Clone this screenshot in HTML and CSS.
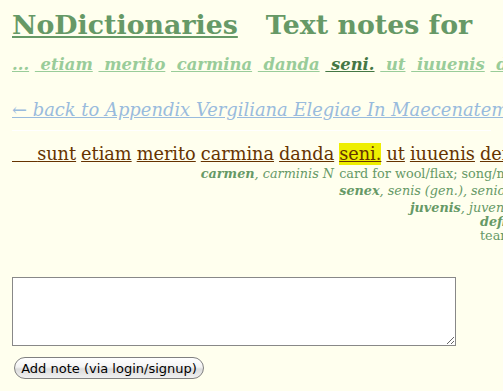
FILE: index.html
```html
<!DOCTYPE html>
<html>
<head>
<meta charset="utf-8">
<link rel="stylesheet" href="styles.css">
</head>
<body>
<div class="page">
  <h1 class="title"><a class="home" href="#">NoDictionaries</a><span class="heading">Text notes for</span></h1>
  <div class="nav">
    <a href="#">...</a> <a href="#">&nbsp;etiam</a> <a href="#">&nbsp;merito</a> <a href="#">&nbsp;carmina</a> <a href="#">&nbsp;danda</a> <a class="current" href="#">&nbsp;seni.</a> <a href="#">&nbsp;ut</a> <a href="#">&nbsp;iuuenis</a> <a href="#">&nbsp;deflendus</a> <a href="#">&nbsp;enim</a>
  </div>
  <div class="back"><a href="#">← back to Appendix Vergiliana Elegiae In Maecenatem</a></div>
  <div class="textblock">
    <div class="grid">
      <a class="w c1" href="#"><span class="lead">&nbsp;&nbsp;&nbsp;&nbsp;&nbsp;</span>sunt</a>
      <a class="w c2" href="#">etiam</a>
      <a class="w c3" href="#">merito</a>
      <a class="w c4" href="#">carmina</a>
      <a class="w c5" href="#">danda</a>
      <a class="w c6 hl" href="#">seni.</a>
      <a class="w c7" href="#">ut</a>
      <a class="w c8" href="#">iuuenis</a>
      <a class="w c9" href="#">deflendus</a>
      <a class="w c10" href="#">enim</a>

      <div class="g r2 c4"><b>carmen</b><i>, carminis N</i></div>
      <div class="g r2 c6">card for wool/flax; song/music; poem</div>
      <div class="g r3 c6"><b>senex</b><i>, senis (gen.), senior -or -us, -</i></div>
      <div class="g r4 c8"><b>juvenis</b><i>, juvenis M</i></div>
      <div class="g r5 c9 wrap"><b>defleo</b><i>, deflere, deflevi</i><br>tears</div>
    </div>
  </div>
  <form class="noteform">
    <textarea class="note"></textarea>
    <button type="button" class="addbtn">Add note (via login/signup)</button>
  </form>
</div>
</body>
</html>
```
FILE: styles.css
```css
html, body {
  margin: 0;
  padding: 0;
  overflow: hidden;
  background: #ffffee;
}
.page {
  padding: 0 12px;
  font-family: "DejaVu Serif", Georgia, serif;
  white-space: nowrap;
}
.title {
  margin: 0;
  padding-top: 9px;
  font-size: 26.8px;
  line-height: 32px;
  font-weight: bold;
  color: #669966;
}
.title a {
  color: #669966;
}
.heading {
  margin-left: 28px;
}
.nav {
  margin-top: 14px;
  font-size: 16.4px;
  line-height: 20px;
  font-weight: bold;
  font-style: italic;
}
.nav a {
  color: #99cc99;
}
.nav a.current {
  color: #447744;
}
.back {
  margin-top: 24px;
  font-size: 17.9px;
  line-height: 22px;
  font-style: italic;
}
.back a {
  color: #99bbdd;
}
.textblock {
  margin-top: 9px;
  border-top: 1px solid #ffffff;
  padding-top: 12px;
}
.grid {
  display: grid;
  grid-template-columns: repeat(10, max-content);
  grid-template-rows: 22px 17px 17px 17px 28px;
  column-gap: 5px;
}
.w {
  grid-row: 1;
  font-size: 17.7px;
  line-height: 22px;
  color: #663300;
}
.lead {
  letter-spacing: -0.6px;
}
.hl {
  background: #eeee00;
}
.g {
  width: 0;
  font-size: 12.8px;
  line-height: 17px;
  color: #669966;
  white-space: nowrap;
  grid-column-end: -1;
}
.g b {
  font-weight: bold;
  font-style: italic;
}
.g.wrap {
  line-height: 14px;
  margin-top: -1px;
}
.c1 { grid-column-start: 1; }
.c2 { grid-column-start: 2; }
.c3 { grid-column-start: 3; }
.c4 { grid-column-start: 4; }
.c5 { grid-column-start: 5; }
.c6 { grid-column-start: 6; }
.c7 { grid-column-start: 7; }
.c8 { grid-column-start: 8; }
.c9 { grid-column-start: 9; }
.c10 { grid-column-start: 10; }
.r2 { grid-row: 2; }
.r3 { grid-row: 3; }
.r4 { grid-row: 4; }
.r5 { grid-row: 5; }
.noteform {
  margin: 33px 0 0;
}
.note {
  display: block;
  box-sizing: border-box;
  width: 444px;
  height: 69px;
  margin: 0;
  border: 1px solid #888888;
  background: #ffffff;
}
.addbtn {
  display: block;
  margin: 11px 0 0 2px;
  height: 22px;
  width: 190px;
  padding: 0;
  border: 1px solid #808080;
  border-radius: 11px;
  background: linear-gradient(#ffffff 0%, #f4f4f4 45%, #dcdcdc 55%, #f0f0f0 100%);
  font-family: "DejaVu Sans", sans-serif;
  font-size: 13px;
  color: #000000;
}
```
